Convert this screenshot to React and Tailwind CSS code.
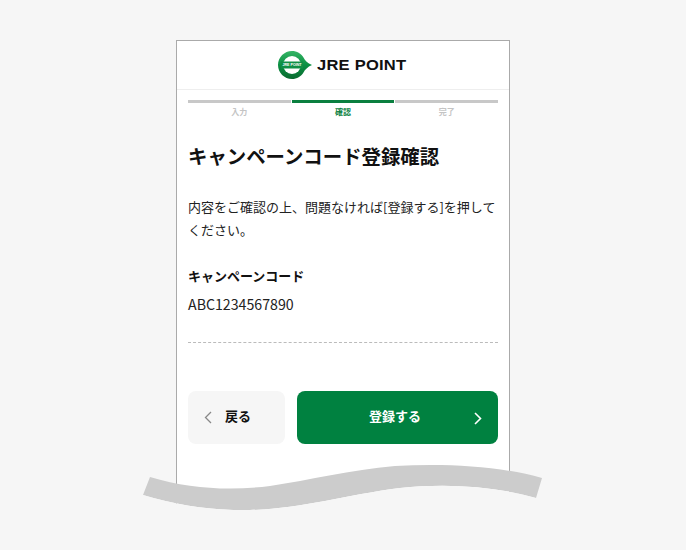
import React from "react";

const jp = "[font-family:'Noto_Sans_CJK_JP','Noto_Sans',sans-serif]";

function Logo() {
  return (
    <div className="flex items-center gap-[4px] pr-[1px]">
      <svg width="36" height="30" viewBox="0 0 36 30">
        <defs>
          <linearGradient id="g" x1="0" y1="0" x2="0" y2="1">
            <stop offset="0" stopColor="#35b565" />
            <stop offset="0.5" stopColor="#0a8f42" />
            <stop offset="1" stopColor="#0a6a30" />
          </linearGradient>
        </defs>
        <path d="M15 1 C20 1 24 3.500 26.500 7.500 C28 10.500 30.500 13 35 15 C30.500 17 28 19.500 26.500 22.500 C24 26.500 20 29 15 29 C7.300 29 1 22.700 1 15 C1 7.300 7.300 1 15 1 Z" fill="url(#g)" />
        <circle cx="15" cy="15" r="9" fill="#ffffff" />
        <path d="M4 11.500 H26 V18.500 H4 Z" fill="#0f8f45" />
        <text x="15" y="16.300" textAnchor="middle" fontSize="3.600" fontWeight="700" fill="#ffffff" fontFamily="'Liberation Sans',sans-serif">JRE POINT</text>
      </svg>
      <span className="text-[14.5px] leading-none font-bold text-[#111] tracking-[0.2px] [font-family:'Liberation_Sans',sans-serif] [transform:scaleX(1.14)] origin-left w-[91px] whitespace-nowrap">JRE POINT</span>
    </div>
  );
}

function Step({ label, active }) {
  return (
    <div className="flex-1 flex flex-col items-center">
      <div className={active ? "h-[3px] w-full bg-[#0a7f3f]" : "h-[3px] w-full bg-[#c8c8c8]"} />
      <span className={active ? "mt-[3px] text-[8px] leading-[12px] font-bold text-[#0a7f3f]" : "mt-[3px] text-[8px] leading-[12px] font-bold text-[#c4c4c4]"}>{label}</span>
    </div>
  );
}

export default function App() {
  return (
    <div className={`relative h-[550px] w-[686px] overflow-hidden bg-[#f6f6f6] flex justify-center pt-[40px] ${jp}`}>
      <div className="h-[480px] w-[334px] border border-[#aaaaaa] bg-white flex flex-col">
        <header className="h-[49px] shrink-0 flex items-center justify-center border-b border-[#eeeeee]">
          <Logo />
        </header>
        <div className="px-[11px] pt-[10px] flex flex-col">
          <div className="flex gap-[1px]">
            <Step label="入力" />
            <Step label="確認" active />
            <Step label="完了" />
          </div>
          <h1 className="mt-[24px] text-[19.4px] leading-[28px] font-bold text-[#111]">キャンペーンコード登録確認</h1>
          <p className="mt-[25px] text-[13px] leading-[23px] text-[#222]">内容をご確認の上、問題なければ[登録する]を押してください。</p>
          <h2 className="mt-[25px] text-[13px] leading-[20px] font-bold text-[#111]">キャンペーンコード</h2>
          <p className="mt-[8px] text-[14.2px] leading-[20px] text-[#222]">ABC1234567890</p>
          <div className="mt-[28px] border-t border-dashed border-[#bbbbbb]" />
          <div className="mt-[48px] flex gap-[12px]">
            <button className="h-[53px] w-[97px] rounded-[8px] bg-[#f6f6f6] flex items-center pl-[16px] gap-[14px] text-[13px] font-bold text-[#111]">
              <svg width="8" height="13" viewBox="0 0 8 13" fill="none" stroke="#888888" strokeWidth="1.3"><path d="M7 1 L1.500 6.500 L7 12" /></svg>
              <span className="mb-[3px] -ml-[1px]">戻る</span>
            </button>
            <button className="relative h-[53px] flex-1 rounded-[8px] bg-[#008140] flex items-center justify-center text-[13px] font-bold text-white">
              <span className="mb-[3px] mr-[5px]">登録する</span>
              <svg className="absolute right-[16px] top-[21px]" width="8" height="13" viewBox="0 0 8 13" fill="none" stroke="#ffffff" strokeWidth="1.600"><path d="M1 1 L6.500 6.500 L1 12" /></svg>
            </button>
          </div>
        </div>
      </div>
      <svg className="absolute left-0 top-0" width="686" height="550" viewBox="0 0 686 550">
        <path d="M143 495 C175 505 215 511 250 510 C300 509 345 495 400 488 C445 483 495 486 536 498 L542 478 C500 466 445 463 395 466 C350 470 310 480 270 486 C230 491 190 489 150 477 Z" fill="#cccccc" />
        <path d="M143 495 C175 505 215 511 250 510 C300 509 345 495 400 488 C445 483 495 486 536 498 L536 550 L143 550 Z" fill="#f6f6f6" />
      </svg>
    </div>
  );
}
